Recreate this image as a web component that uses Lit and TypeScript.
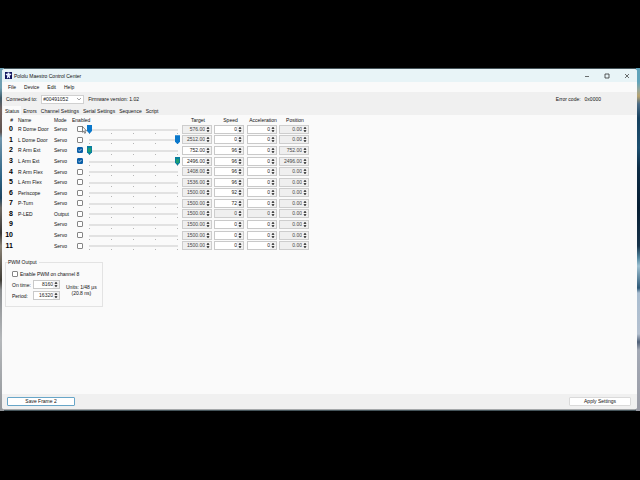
import { LitElement, html, css, svg, nothing } from "lit";
import { customElement, property } from "lit/decorators.js";
import { classMap } from "lit/directives/class-map.js";

interface Channel {
  name: string;
  mode: string;
  enabled?: boolean;
  slider?: number;
  target: string;
  speed: string;
  position: string;
  locked?: boolean;
}

const CHANNELS: Channel[] = [
  { name: "R Dome Door", mode: "Servo", slider: 0, target: "576.00", speed: "0", position: "0.00" },
  { name: "L Dome Door", mode: "Servo", slider: 100, target: "2512.00", speed: "0", position: "0.00" },
  { name: "R Arm Ext", mode: "Servo", enabled: true, slider: 0, target: "752.00", speed: "96", position: "752.00" },
  { name: "L Arm Ext", mode: "Servo", enabled: true, slider: 100, target: "2496.00", speed: "96", position: "2496.00" },
  { name: "R Arm Flex", mode: "Servo", target: "1408.00", speed: "96", position: "0.00" },
  { name: "L Arm Flex", mode: "Servo", target: "1536.00", speed: "96", position: "0.00" },
  { name: "Periscope", mode: "Servo", target: "1500.00", speed: "92", position: "0.00" },
  { name: "P-Turn", mode: "Servo", target: "1500.00", speed: "72", position: "0.00" },
  { name: "P-LED", mode: "Output", target: "1500.00", speed: "0", position: "0.00", locked: true },
  { name: "", mode: "Servo", target: "1500.00", speed: "0", position: "0.00" },
  { name: "", mode: "Servo", target: "1500.00", speed: "0", position: "0.00" },
  { name: "", mode: "Servo", target: "1500.00", speed: "0", position: "0.00" },
];

const MENUS = ["File", "Device", "Edit", "Help"];
const TABS = ["Status", "Errors", "Channel Settings", "Serial Settings", "Sequence", "Script"];

@customElement("spin-box")
export class SpinBox extends LitElement {
  @property() value = "0";
  @property() label = "";
  @property({ type: Boolean }) dim = false;

  static styles = css`
    :host {
      display: block;
    }
    .box {
      display: flex;
      align-items: center;
      box-sizing: border-box;
      height: 9px;
      border: 1px solid #c9c9c9;
      background: #fff;
    }
    .dim {
      background: #efefef;
      border-color: #cdcdcd;
    }
    .field {
      flex: 1;
      min-width: 0;
      height: 7px;
      padding: 0;
      border: 0;
      outline: 0;
      background: transparent;
      font: 5px/7px "Liberation Sans", Arial, sans-serif;
      color: #222;
      text-align: right;
    }
    .dim .field {
      color: #444;
    }
    .arrows {
      width: 6px;
      height: 7px;
      background: #f0f0f0;
    }
  `;

  render() {
    return html`<div class=${classMap({ box: true, dim: this.dim })}>
      <input class="field" type="text" aria-label=${this.label} .value=${this.value} />
      <svg class="arrows" viewBox="0 0 6 7" aria-hidden="true">
        <path d="M3 .7 4.5 2.7H1.5zM1.5 4.3H4.5L3 6.3z" fill="#111" />
      </svg>
    </div>`;
  }
}

@customElement("app-root")
export class AppRoot extends LitElement {
  static styles = css`
    :host {
      display: grid;
      grid-template-rows: 68px 1fr 69px;
      min-height: 100vh;
      background: #000;
      font: 5px/8px "Liberation Sans", Arial, sans-serif;
      color: #111;
    }
    .desktop {
      grid-row: 2;
      display: flex;
      padding: 1px 3px 1px 2px;
      background:
        linear-gradient(#5fa3ba 0 14px, #9aa79a 22px, #b7a26e 28px, #4b6c86 36px, #16405e 50px, #1d4f70 80px, #0c2c45 100px, #061e33 140px, #17334a 178px, #5387a0 190px, #9fc1d2 198px, #2d5877 220px, #a9bdd0 225px, #b4c0cf 266px, #4f6077 274px, #a3a9b5 282px, #9a9ca6) right / 4px 100% no-repeat,
        linear-gradient(#6f9fb2 0 20px, #3e5a69 30px, #75645f 42px, #5e5350 64px, #7297ad 70px, #2c6384 110px, #1e4561 130px, #706c65 140px, #3a3835 165px, #8c8478 178px, #403d36 212px, #8a8d8f 222px, #b5b8bb 272px, #93979b) left / 4px 100% no-repeat,
        #45545a;
    }
    .window {
      flex: 1;
      min-width: 0;
      display: flex;
      flex-direction: column;
      border-radius: 3px;
      overflow: hidden;
      background: #fafafa;
      border-bottom: 1px solid #a5a8aa;
    }
    .titlebar {
      display: flex;
      align-items: center;
      height: 13px;
      padding-left: 3px;
      background: #e8f4f7;
    }
    .logo {
      width: 7px;
      height: 7px;
      margin-right: 2px;
    }
    .title {
      flex: 1;
      margin: 0;
      font-size: 5px;
      font-weight: 400;
    }
    .winbtn {
      width: 20px;
      height: 13px;
      padding: 0;
      border: 0;
      background: none;
      display: grid;
      place-items: center;
    }
    .glyph {
      width: 6px;
      height: 6px;
      fill: none;
      stroke: #333;
    }
    .menu {
      display: flex;
      gap: 8px;
      height: 10px;
      padding-left: 6px;
      background: #fafafa;
    }
    .flat {
      padding: 0;
      border: 0;
      background: none;
      font: inherit;
      color: inherit;
    }
    .toolbar {
      display: flex;
      align-items: center;
      height: 14px;
      padding: 0 36px 0 4px;
      background: #f0f0f0;
    }
    .device {
      appearance: none;
      width: 43px;
      height: 9px;
      margin: 0 4px;
      padding: 0 1px;
      border: 1px solid #d0d0d0;
      border-radius: 0;
      font: 5px/7px "Liberation Sans", Arial, sans-serif;
      color: #222;
      background: #fff
        url("data:image/svg+xml,%3Csvg xmlns='http://www.w3.org/2000/svg' viewBox='0 0 6 6'%3E%3Cpath d='M1 2l2 2 2-2' fill='none' stroke='%23777' stroke-width='.7'/%3E%3C/svg%3E")
        right 1px center / 6px 6px no-repeat;
    }
    .error {
      display: flex;
      gap: 4px;
      margin-left: auto;
    }
    .tabs {
      display: flex;
      align-items: flex-end;
      height: 9px;
      padding-left: 1px;
      background: #f0f0f0;
    }
    .tab {
      height: 8px;
      padding: 0 2px;
      border: 0;
      background: none;
      font: 5px/8px "Liberation Sans", Arial, sans-serif;
      color: #111;
    }
    .tab.active {
      height: 9px;
      background: #fafafa;
    }
    .page {
      flex: 1;
      padding: 1px 2px;
    }
    .channels {
      table-layout: fixed;
      border-collapse: collapse;
      width: 307px;
      height: 135px;
    }
    .channels th,
    .channels td {
      padding: 0;
      font-weight: 400;
      text-align: left;
      vertical-align: middle;
      white-space: nowrap;
    }
    .channels thead tr {
      height: 8px;
    }
    .channels thead .mid {
      text-align: center;
    }
    .channels .num {
      padding-right: 5px;
      text-align: right;
      font-size: 7px;
      font-weight: 700;
      color: #000;
    }
    .channels thead .num {
      font-size: 5px;
      font-weight: 400;
    }
    .cn { width: 14px; }
    .cname { width: 36px; }
    .cmode { width: 18px; }
    .cen { width: 15px; }
    .cslide { width: 95px; }
    .cbox { width: 32px; }
    .cwide { width: 33px; }
    .channels td.enable {
      position: relative;
      padding-left: 5px;
    }
    .check {
      appearance: none;
      display: block;
      box-sizing: border-box;
      width: 6px;
      height: 6px;
      margin: 0;
      border: 1px solid #858585;
      border-radius: 1px;
      background: #fff;
    }
    .check:checked {
      border-color: #0a5fa8;
      background: #0a5fa8
        url("data:image/svg+xml,%3Csvg xmlns='http://www.w3.org/2000/svg' viewBox='0 0 4 4'%3E%3Cpath d='M.4 2l1.1 1.1L3.6.9' fill='none' stroke='white' stroke-width='.7'/%3E%3C/svg%3E");
    }
    .cursor {
      position: absolute;
      left: 10px;
      top: 2px;
      width: 5px;
      height: 8px;
    }
    .slide {
      appearance: none;
      display: block;
      width: 93px;
      height: 9px;
      margin: 0;
      background:
        linear-gradient(#e2e2e2, #e2e2e2) 2px 4px / 89px 2px no-repeat,
        linear-gradient(#b5b5b5, #b5b5b5) 2px 8px / 1px 1px no-repeat,
        linear-gradient(#b5b5b5, #b5b5b5) 24px 8px / 1px 1px no-repeat,
        linear-gradient(#b5b5b5, #b5b5b5) 46px 8px / 1px 1px no-repeat,
        linear-gradient(#b5b5b5, #b5b5b5) 68px 8px / 1px 1px no-repeat,
        linear-gradient(#b5b5b5, #b5b5b5) 90px 8px / 1px 1px no-repeat;
    }
    .slide::-webkit-slider-thumb {
      appearance: none;
      width: 5px;
      height: 9px;
      border: 0;
      background: #0a78cb;
      clip-path: polygon(0 0, 100% 0, 100% 70%, 50% 100%, 0 70%);
    }
    .slide.live::-webkit-slider-thumb {
      background: linear-gradient(#1d9f72, #1d9f72) 1px 2px / 3px 4px no-repeat, #087f9e;
    }
    .slide.idle::-webkit-slider-thumb {
      opacity: 0;
    }
    .spin {
      width: 30px;
    }
    .pwm {
      box-sizing: border-box;
      width: 98px;
      margin: 7px 0 0 1px;
      padding: 4px 5px 6px 6px;
      border: 1px solid #e3e3e3;
    }
    .pwm legend {
      margin-left: -4px;
      padding: 0 2px 0 0;
    }
    .tick {
      display: flex;
      align-items: center;
      gap: 2px;
    }
    .timing {
      display: flex;
      align-items: center;
      gap: 6px;
      margin-top: 2px;
    }
    .fields {
      display: grid;
      grid-template-columns: 21px 27px;
      align-items: center;
      row-gap: 2px;
    }
    .units {
      text-align: center;
      line-height: 6px;
      white-space: nowrap;
    }
    .footer {
      display: flex;
      justify-content: space-between;
      align-items: center;
      height: 15px;
      padding: 0 6px 0 5px;
      background: #f0f0f0;
    }
    .push {
      box-sizing: border-box;
      height: 9px;
      padding: 0;
      border: 1px solid #dadada;
      border-radius: 1px;
      background: #fff;
      font: 5px/7px "Liberation Sans", Arial, sans-serif;
      color: #111;
    }
    .save {
      width: 68px;
      border-color: #68a6c8;
    }
    .apply {
      width: 62px;
    }
  `;

  private spin(label: string, value: string, dim = false) {
    return html`<spin-box class="spin" .label=${label} .value=${value} .dim=${dim}></spin-box>`;
  }

  private row(c: Channel, i: number) {
    const live = !!c.enabled;
    return html`<tr>
      <th class="num" scope="row">${i}</th>
      <td>${c.name}</td>
      <td>${c.mode}</td>
      <td class="enable">
        <input class="check" type="checkbox" aria-label="Enable channel ${i}" .checked=${live} />
        ${i === 0
          ? html`<svg class="cursor" viewBox="0 0 5 8" aria-hidden="true">
              <path d="M.4.5v5.8l1.3-1.2.9 2.2 1-.4-.9-2.1h1.8z" fill="#fff" stroke="#333" stroke-width=".6" />
            </svg>`
          : nothing}
      </td>
      <td>
        <input
          class=${classMap({ slide: true, live, idle: c.slider === undefined })}
          type="range"
          min="0"
          max="100"
          aria-label="Channel ${i} target slider"
          .value=${String(c.slider ?? 50)}
        />
      </td>
      <td>${this.spin("Target", c.target, !live)}</td>
      <td>${this.spin("Speed", c.speed, c.locked)}</td>
      <td>${this.spin("Acceleration", "0", c.locked)}</td>
      <td>${this.spin("Position", c.position, true)}</td>
    </tr>`;
  }

  private windowButton(label: string, shape: unknown) {
    return html`<button class="winbtn" aria-label=${label}>
      <svg class="glyph" viewBox="0 0 6 6">${shape}</svg>
    </button>`;
  }

  render() {
    return html`<div class="desktop">
      <main class="window">
        <header class="titlebar">
          <svg class="logo" viewBox="0 0 7 7" aria-hidden="true">
            <path d="M0 0h7v7H0z" fill="#10145e" />
            <path d="M2.6 .6h1.8v1.2h1.8v1.2L4.7 3.6l.5 2.6H4.1L3.5 4.8 2.9 6.2H1.8l.5-2.6L.8 3V1.8h1.8z" fill="#e8efff" />
          </svg>
          <h1 class="title">Pololu Maestro Control Center</h1>
          ${this.windowButton("Minimize", svg`<path d="M1 3.5h4" stroke-width=".7" />`)}
          ${this.windowButton("Maximize", svg`<path d="M1 1h4v4H1z" stroke-width=".8" />`)}
          ${this.windowButton("Close", svg`<path d="M1 1l4 4M5 1 1 5" stroke-width=".7" />`)}
        </header>
        <nav class="menu">${MENUS.map((m) => html`<button class="flat">${m}</button>`)}</nav>
        <div class="toolbar">
          <label for="device">Connected to:</label>
          <select class="device" id="device"><option>#00491052</option></select>
          <span>Firmware version: 1.02</span>
          <div class="error"><span>Error code:</span><span>0x0000</span></div>
        </div>
        <div class="tabs" role="tablist">
          ${TABS.map(
            (t, i) => html`<button role="tab" aria-selected=${i === 0} class=${classMap({ tab: true, active: i === 0 })}>${t}</button>`,
          )}
        </div>
        <section class="page">
          <table class="channels">
            <colgroup>
              <col class="cn" /><col class="cname" /><col class="cmode" /><col class="cen" /><col class="cslide" />
              <col class="cbox" /><col class="cwide" /><col class="cbox" /><col class="cbox" />
            </colgroup>
            <thead>
              <tr>
                <th class="num">#</th>
                <th>Name</th>
                <th>Mode</th>
                <th>Enabled</th>
                <th></th>
                <th class="mid">Target</th>
                <th class="mid">Speed</th>
                <th class="mid">Acceleration</th>
                <th class="mid">Position</th>
              </tr>
            </thead>
            <tbody>
              ${CHANNELS.map((c, i) => this.row(c, i))}
            </tbody>
          </table>
          <fieldset class="pwm">
            <legend>PWM Output</legend>
            <label class="tick"><input class="check" type="checkbox" />Enable PWM on channel 8</label>
            <div class="timing">
              <div class="fields">
                <span>On time:</span><spin-box .label=${"On time"} .value=${"8160"}></spin-box>
                <span>Period:</span><spin-box .label=${"Period"} .value=${"16320"}></spin-box>
              </div>
              <div class="units">Units: 1/48 µs<br />(20.8 ns)</div>
            </div>
          </fieldset>
        </section>
        <footer class="footer">
          <button class="push save">Save Frame 2</button>
          <button class="push apply">Apply Settings</button>
        </footer>
      </main>
    </div>`;
  }
}
